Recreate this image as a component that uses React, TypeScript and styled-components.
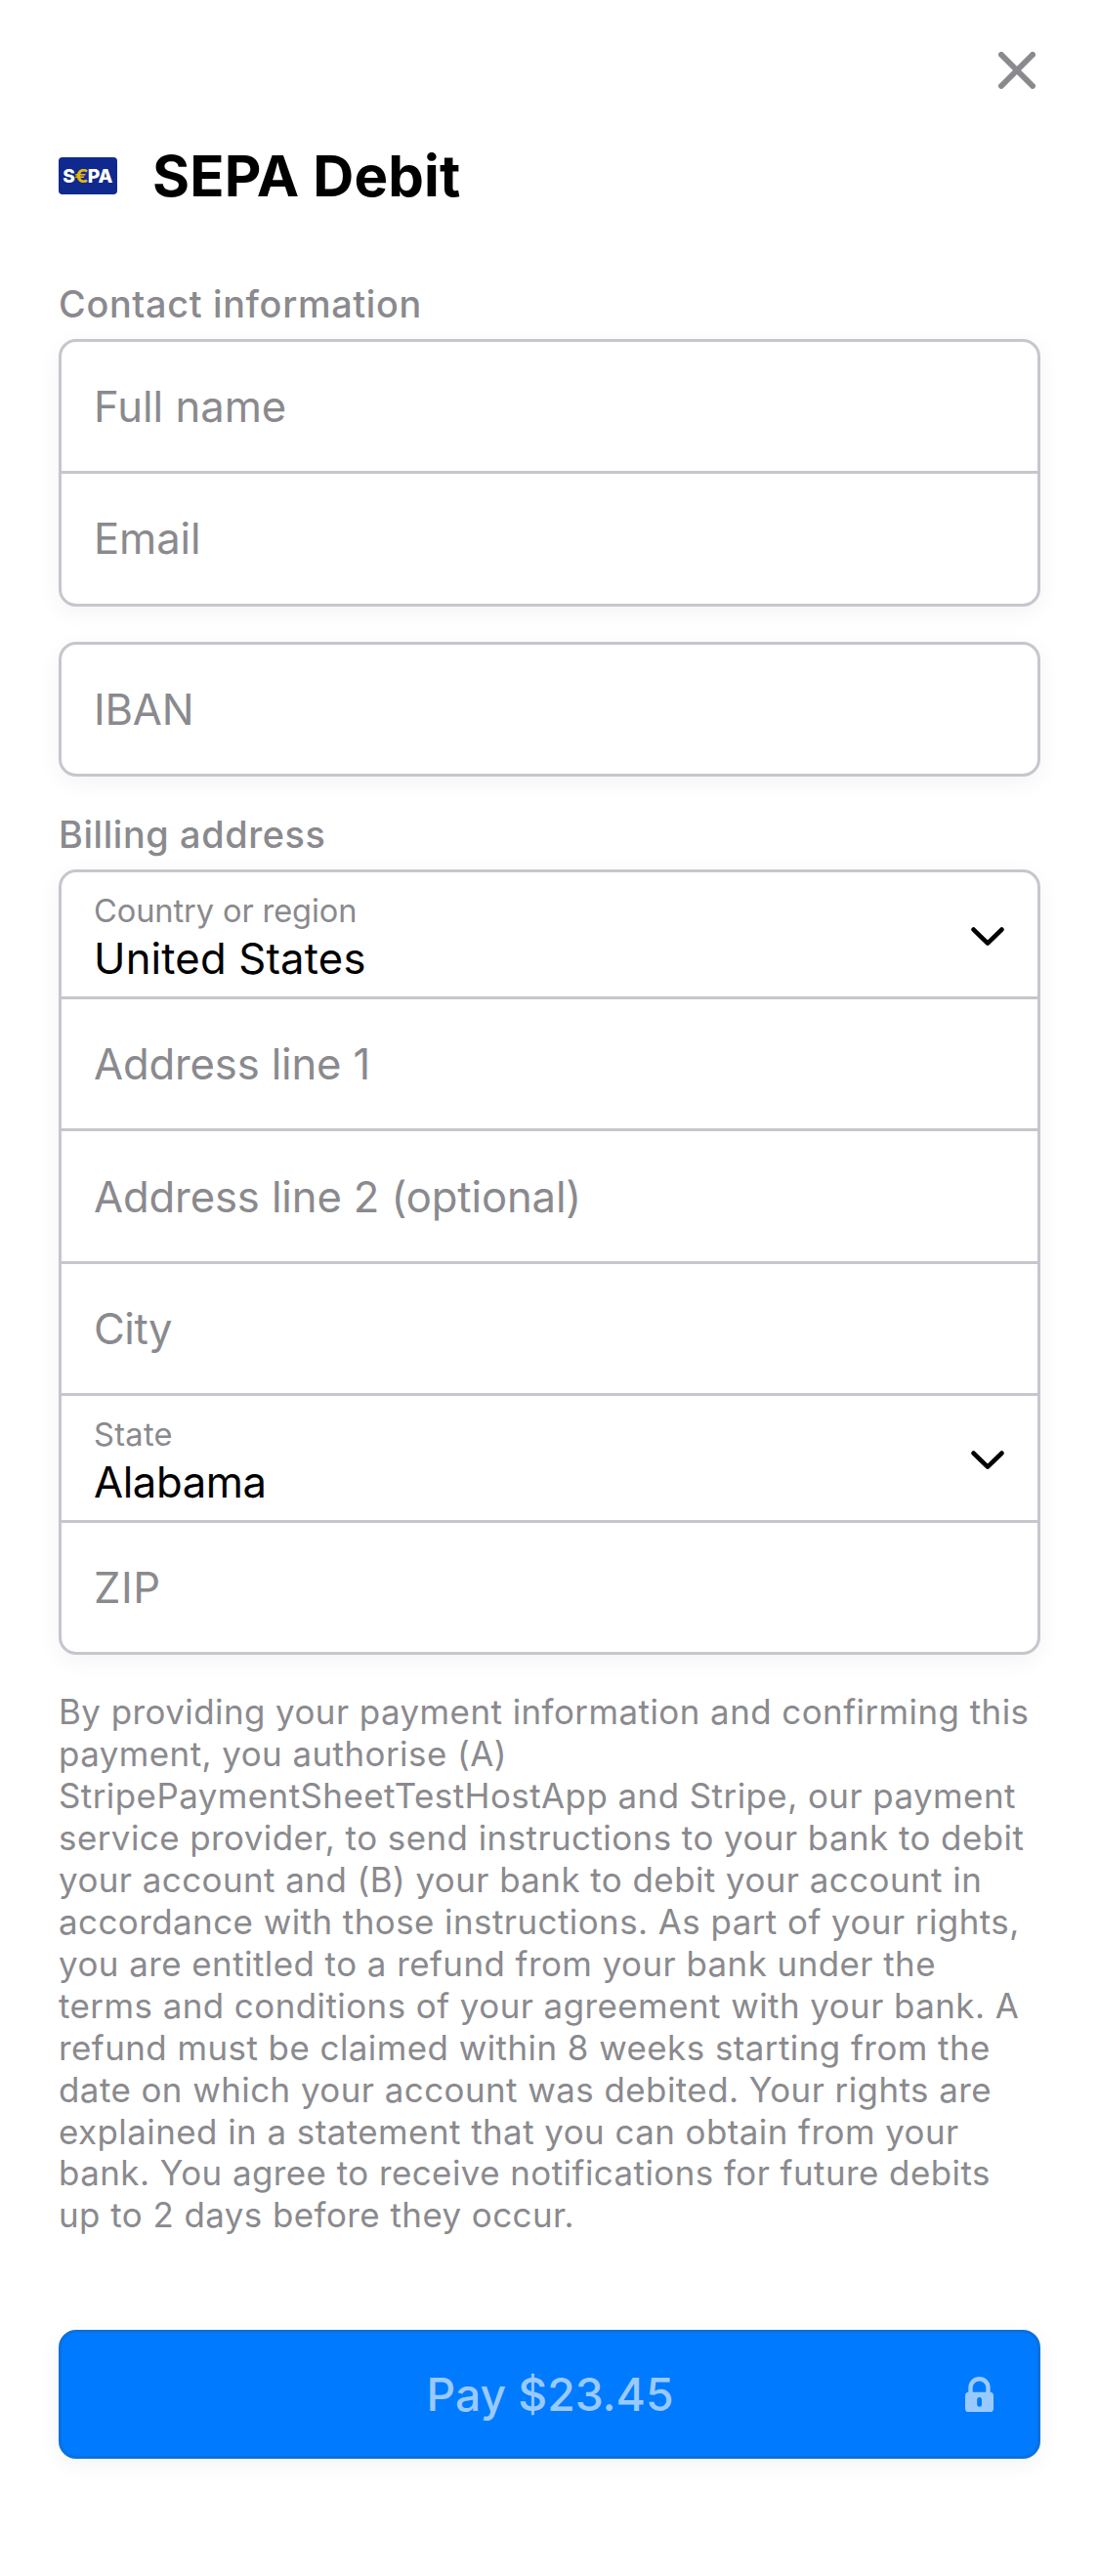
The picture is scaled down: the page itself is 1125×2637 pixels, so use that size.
import styled, { createGlobalStyle } from "styled-components";

const gray = "#8a8a8e";
const line = "#c7c6cc";
const blue = "#007aff";

const GlobalStyle = createGlobalStyle`
  body {
    margin: 0;
    background: #fff;
  }
  *, *::before, *::after {
    box-sizing: border-box;
  }
`;

const Sheet = styled.main`
  width: 1125px;
  height: 2637px;
  padding: 53px 60px 0;
  display: flex;
  flex-direction: column;
  background: #fff;
  color: #000;
  font-family: Inter, "Liberation Sans", sans-serif;
`;

const TopBar = styled.header`
  display: flex;
  justify-content: flex-end;
  padding-right: 5px;
  height: 38px;
`;

const CloseButton = styled.button`
  width: 38px;
  height: 38px;
  padding: 0;
  border: 0;
  background: none;
  svg {
    display: block;
  }
`;

const Heading = styled.div`
  display: flex;
  align-items: center;
  gap: 36px;
  height: 70px;
  margin-top: 54px;
`;

const Title = styled.h1`
  margin: 0;
  font-size: 58.2px;
  font-weight: 700;
  line-height: 70px;
  letter-spacing: 0.15px;
  white-space: nowrap;
`;

const SectionLabel = styled.h2<{ $top: number; $spacing: number }>`
  margin: ${(p) => p.$top}px 0 13px;
  height: 46px;
  font-size: 37.8px;
  font-weight: 500;
  line-height: 46px;
  letter-spacing: ${(p) => p.$spacing}px;
  color: ${gray};
`;

const Group = styled.section<{ $top?: number }>`
  margin-top: ${(p) => p.$top ?? 0}px;
  border: 3px solid ${line};
  border-radius: 18px;
  background: #fff;
  box-shadow: 0 6px 24px rgba(0, 0, 0, 0.05);
`;

const Row = styled.div<{ $height?: number; $shift?: number }>`
  box-sizing: content-box;
  height: ${(p) => (p.$height ?? 132) - (p.$shift ?? 0)}px;
  padding: ${(p) => p.$shift ?? 0}px 34px 0 33px;
  & + & {
    border-top: 3px solid ${line};
  }
`;

const SelectRow = styled(Row)`
  display: flex;
  align-items: center;
  justify-content: space-between;
  svg {
    margin-top: 4px;
  }
`;

const Placeholder = styled.span<{ $spacing?: number }>`
  display: block;
  font-size: 43.6px;
  line-height: 133px;
  letter-spacing: ${(p) => p.$spacing ?? 0}px;
  color: ${gray};
`;

const SelectText = styled.div`
  align-self: flex-start;
  display: flex;
  flex-direction: column;
  gap: 3px;
  padding-top: 19px;
`;

const FloatingLabel = styled.span<{ $spacing: number }>`
  font-size: 32.6px;
  line-height: 40px;
  letter-spacing: ${(p) => p.$spacing}px;
  color: ${gray};
`;

const Value = styled.span<{ $spacing: number }>`
  font-size: 43.6px;
  line-height: 53px;
  letter-spacing: ${(p) => p.$spacing}px;
`;

const Mandate = styled.p`
  margin: 37px 0 0;
  font-size: 34.9px;
  line-height: 42.95px;
  letter-spacing: 0.46px;
  white-space: nowrap;
  color: ${gray};
`;

const PayButton = styled.button`
  display: grid;
  grid-template-columns: 1fr auto 1fr;
  align-items: center;
  flex: none;
  width: 100%;
  height: 132px;
  margin-top: 95.65px;
  padding: 0 45px;
  border: 3px solid #0b70e0;
  border-radius: 18px;
  background: ${blue};
  box-shadow: 0 6px 24px rgba(0, 0, 0, 0.05);
  color: #99caff;
  font-family: inherit;
`;

const PayLabel = styled.span`
  grid-column: 2;
  padding-left: 1px;
  font-size: 46.3px;
  font-weight: 500;
  line-height: 56px;
  letter-spacing: -0.06px;
`;

const LockIcon = styled.svg`
  grid-column: 3;
  justify-self: end;
`;

const Chevron = () => (
  <svg width="34" height="20" viewBox="0 0 34 20" fill="none">
    <path d="M2.6 2.6 17 16.6 31.4 2.6" stroke="#000" strokeWidth="4.7" strokeLinecap="round" strokeLinejoin="round" />
  </svg>
);

const SepaLogo = () => (
  <svg width="60" height="38" viewBox="0 0 60 38" fontFamily="Inter, sans-serif" fontSize="19.2">
    <rect width="60" height="38" rx="4" fill="#10298e" />
    <text x="4.3" y="26" fontWeight="800" fill="#fff" textLength="12.6" lengthAdjust="spacingAndGlyphs">S</text>
    <text x="16.3" y="26" fontWeight="700" fill="#e5b80b" textLength="14.4" lengthAdjust="spacingAndGlyphs">€</text>
    <text x="29.7" y="26" fontWeight="800" fill="#fff" textLength="25.8" lengthAdjust="spacingAndGlyphs">PA</text>
  </svg>
);

const mandateLines = [
  "By providing your payment information and confirming this",
  "payment, you authorise (A)",
  "StripePaymentSheetTestHostApp and Stripe, our payment",
  "service provider, to send instructions to your bank to debit",
  "your account and (B) your bank to debit your account in",
  "accordance with those instructions. As part of your rights,",
  "you are entitled to a refund from your bank under the",
  "terms and conditions of your agreement with your bank. A",
  "refund must be claimed within 8 weeks starting from the",
  "date on which your account was debited. Your rights are",
  "explained in a statement that you can obtain from your",
  "bank. You agree to receive notifications for future debits",
  "up to 2 days before they occur.",
];

export default function App() {
  return (
    <>
      <GlobalStyle />
      <Sheet>
        <TopBar>
          <CloseButton aria-label="Close">
            <svg width="38" height="38" viewBox="0 0 38 38">
              <path d="M3 3 35 35M35 3 3 35" stroke={gray} strokeWidth="6" strokeLinecap="round" />
            </svg>
          </CloseButton>
        </TopBar>

        <Heading>
          <SepaLogo />
          <Title>SEPA Debit</Title>
        </Heading>

        <SectionLabel $top={73} $spacing={0.68}>Contact information</SectionLabel>
        <Group>
          <Row><Placeholder>Full name</Placeholder></Row>
          <Row $height={133}><Placeholder $spacing={-0.1}>Email</Placeholder></Row>
        </Group>
        <Group $top={36}>
          <Row><Placeholder $spacing={-0.2}>IBAN</Placeholder></Row>
        </Group>

        <SectionLabel $top={36} $spacing={0.62}>Billing address</SectionLabel>
        <Group>
          <SelectRow $height={127}>
            <SelectText>
              <FloatingLabel $spacing={-0.1}>Country or region</FloatingLabel>
              <Value $spacing={0.19}>United States</Value>
            </SelectText>
            <Chevron />
          </SelectRow>
          <Row><Placeholder $spacing={-0.15}>Address line 1</Placeholder></Row>
          <Row $height={133} $shift={1}><Placeholder $spacing={-0.12}>Address line 2 (optional)</Placeholder></Row>
          <Row><Placeholder $spacing={-0.5}>City</Placeholder></Row>
          <SelectRow $height={127}>
            <SelectText>
              <FloatingLabel $spacing={0.3}>State</FloatingLabel>
              <Value $spacing={-0.4}>Alabama</Value>
            </SelectText>
            <Chevron />
          </SelectRow>
          <Row><Placeholder $spacing={0.6}>ZIP</Placeholder></Row>
        </Group>

        <Mandate>
          {mandateLines.map((text, i) => (
            <span key={text}>
              {text}
              {i < mandateLines.length - 1 && <br />}
            </span>
          ))}
        </Mandate>

        <PayButton>
          <PayLabel>Pay $23.45</PayLabel>
          <LockIcon width="29" height="36" viewBox="0 0 29 36">
            <path d="M5.5 17V11.2a9 9 0 0 1 18 0V17" fill="none" stroke="#99caff" strokeWidth="4.4" />
            <rect y="15.8" width="29" height="20.2" rx="3.6" fill="#99caff" />
            <rect x="12.2" y="21" width="4.8" height="9.8" rx="2.4" fill={blue} />
          </LockIcon>
        </PayButton>
      </Sheet>
    </>
  );
}
